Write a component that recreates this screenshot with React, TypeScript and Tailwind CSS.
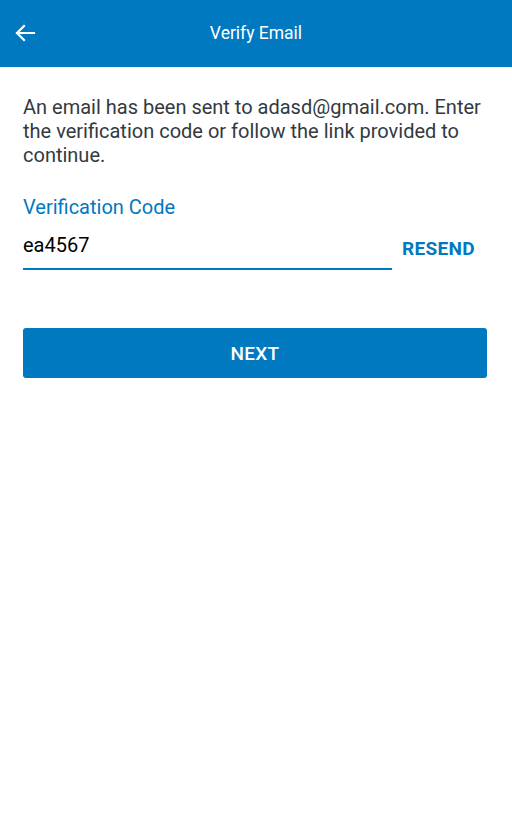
import { useState } from 'react';

export default function App() {
  const [code, setCode] = useState('ea4567');

  return (
    <div
      className="flex min-h-[820px] w-full flex-col bg-white"
      style={{ fontFamily: 'Roboto, "Noto Sans", sans-serif' }}
    >
      {/* Top bar */}
      <header className="relative flex h-[67px] items-center justify-center bg-[#0079c1]">
        <button
          type="button"
          aria-label="Back"
          className="absolute left-[13px] top-[21px] text-white"
        >
          <svg
            className="h-6 w-6"
            viewBox="0 0 24 24"
            fill="none"
            stroke="currentColor"
            strokeWidth={2.2}
            strokeLinecap="square"
          >
            <path d="M21 12H4M11 5l-7 7 7 7" />
          </svg>
        </button>
        <h1 className="text-[17.5px] text-white">Verify Email</h1>
      </header>

      <main className="flex flex-col px-[23px] pt-[28px]">
        <p className="text-[20px] leading-[24px] text-[#333a40]">
          An email has been sent to adasd@gmail.com. Enter the verification
          code or follow the link provided to continue.
        </p>

        <label className="mt-[28px] text-[20px] leading-[24px] text-[#0079c1]">
          Verification Code
        </label>

        <div className="mt-[12px] flex items-end">
          <div className="w-[369px] border-b-2 border-[#0079c1] pb-[9px]">
            <input
              value={code}
              onChange={(e) => setCode(e.target.value)}
              className="h-[28px] w-full bg-transparent text-[20px] leading-[28px] text-black outline-none"
            />
          </div>
          <button
            type="button"
            className="mb-[9px] ml-[10px] text-[19px] font-bold leading-[24px] tracking-[0.3px] text-[#0079c1]"
          >
            RESEND
          </button>
        </div>

        <button
          type="button"
          className="mt-[58px] h-[50px] w-[464px] rounded-[3px] bg-[#0079c1] pt-[3px] text-[19px] font-medium tracking-[0.3px] text-white"
        >
          NEXT
        </button>
      </main>
    </div>
  );
}
